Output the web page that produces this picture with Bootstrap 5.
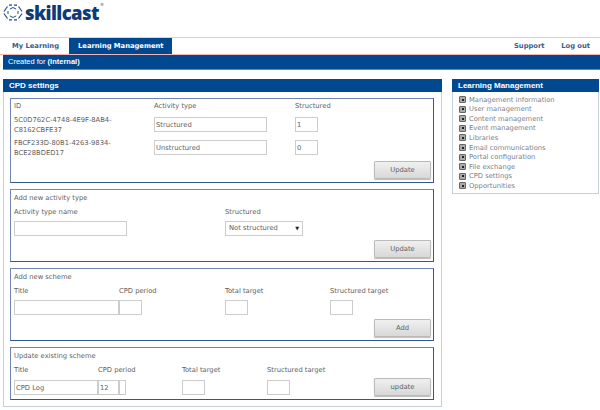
<!DOCTYPE html>
<html lang="en">
<head>
    <meta charset="UTF-8" />
    <title>CPD settings</title>
    <link href="https://cdn.jsdelivr.net/npm/bootstrap@5.3.2/dist/css/bootstrap.min.css" rel="stylesheet" />
    <style>
        html, body { height: 410px; overflow: hidden; }
        body { font-family: "DejaVu Sans", sans-serif; font-size: 6.75px; line-height: 10px; color: #606060; background: #fff; }
        .logo { height: 37px; padding-left: 3px; }
        .logo-icon { margin-top: 4px; }
        .logo-text { font-family: "Open Sans", sans-serif; font-weight: 800; font-size: 18.5px; line-height: 25px; color: #0f3a78; letter-spacing: -.6px; margin-left: 2px; }
        .logo-reg { font-size: 4px; line-height: 4px; color: #0f3a78; margin: 3px 0 0 1px; }
        .topnav { height: 18px; border-top: 1px solid #f5c6c6; border-bottom: 1px solid #f5b5b5; }
        .topnav a { font-weight: 700; line-height: 16px; color: #3c5a8c; text-decoration: none; }
        .topnav .tab { padding: 0 10px 0 12px; }
        .topnav .tab.active { background: #004990; color: #fff; padding: 0 8px 0 9px; }
        .topnav .right { width: 76px; margin-right: 10px; }
        .created { height: 15px; margin-left: 3px; background: #004990; color: #fff; font-family: "Liberation Sans", sans-serif; font-size: 7.5px; line-height: 14px; padding-left: 5px; border-bottom: 1px solid #6d83ad; }
        .content { padding: 9px 1px 0 3px; }
        .main-panel { width: 439px; height: 328px; border: 1px solid #c5cfe2; border-top: 0; }
        .side-panel { width: 147px; height: 115px; border: 1px solid #c5cfe2; border-top: 0; }
        .panel-head { height: 13px; margin: 0 -1px; background: #004990; color: #fff; font-family: "Liberation Sans", sans-serif; font-weight: 700; font-size: 8px; line-height: 13px; padding-left: 6px; }
        .side-list { padding: 3px 0 0 6px; }
        .side-list a { display: flex; align-items: center; height: 9.55px; color: #7b7f88; text-decoration: none; }
        .bullet { width: 7px; height: 7px; margin-right: 3px; background: #aaa; border: 1px solid #666; border-radius: 1px; display: flex; align-items: center; justify-content: center; }
        .bullet::after { content: ""; width: 2px; height: 2px; background: #222; }
        .sets { padding: 6px 7px 0 6px; }
        .set { border: 1px solid #34558f; border-left-color: #6f86b4; border-top-color: #6f86b4; padding: 3px 3px 0 3px; margin-bottom: 6px; position: relative; }
        .set1 { height: 85px; padding-top: 2px; } .set2, .set3 { height: 73px; } .set4 { height: 53px; }
        .lbl { height: 10px; line-height: 10px; }
        .fld { height: 15px; border: 1px solid #ccc; background: #fff; padding: 0 1px; color: #606060; font: inherit; line-height: 13px; display: block; border-radius: 0; outline: 0; }
        .btn-upd { width: 57px; height: 18px; padding: 0; font-size: 6.75px; line-height: 16px; color: #5a6068; background: linear-gradient(#f0f0f0, #d8d8d8); border: 1px solid #bbb; border-radius: 1px; box-shadow: 0 1px 1px #bbb; }
        .btn-slot { position: absolute; right: 2px; bottom: 3px; }
        .c-id { width: 140px; } .c-type { width: 141px; } .c-str { width: 60px; }
        .id-cell { margin-top: -2px; }
        .gap-head { margin-bottom: 6px; }
        .gap-row { margin-bottom: 8px; }
        .gap-lbl { margin-bottom: 4px; }
        .gap-lbl-wide { margin-bottom: 5px; }
        .w-113 { width: 113px; } .w-23 { width: 23px; }
        .c-211 { width: 211px; }
        .sel { width: 78px; display: flex; justify-content: space-between; align-items: center; padding: 0 3px; }
        .caret-d { font-size: 5px; color: #222; }
        .c-105 { width: 105px; } .c-106 { width: 106px; }
        .c-84 { width: 84px; } .c-85 { width: 85px; }
        .w-105 { width: 105px; } .w-84 { width: 84px; } .w-21 { width: 21px; } .w-7 { width: 7px; }
    </style>
</head>
<body>
    <div class="logo d-flex align-items-start">
        <svg class="logo-icon" width="20" height="17" viewBox="0 0 20 17" fill="none" stroke="#1f4b8e" stroke-width="1.2">
            <path d="M6 1.2h3M11 1.2h3M15.5 2.5l3.6 5M19.1 9.5l-3.6 5M14 15.8h-3M9 15.8H6M4.5 14.5L.9 9.5M.9 7.5l3.6-5" />
            <path d="M10 3.5l3.2 1.6M15 7v3M13.2 11.9L10 13.5l-3.2-1.6M5 10V7M6.8 5.1L10 3.5" stroke-width="1" />
        </svg>
        <span class="logo-text">skillcast</span>
        <span class="logo-reg">®</span>
    </div>

    <nav class="topnav d-flex justify-content-between">
        <div class="d-flex">
            <a class="tab" href="#">My Learning</a>
            <a class="tab active" href="#">Learning Management</a>
        </div>
        <div class="right d-flex justify-content-between">
            <a href="#">Support</a>
            <a href="#">Log out</a>
        </div>
    </nav>
    <div class="created">Created for <b>(Internal)</b></div>

    <div class="content d-flex justify-content-between">
        <div class="main-panel">
            <div class="panel-head">CPD settings</div>
            <div class="sets">
                <div class="set set1">
                    <div class="d-flex gap-head">
                        <div class="c-id lbl">ID</div>
                        <div class="c-type lbl">Activity type</div>
                        <div class="c-str lbl">Structured</div>
                    </div>
                    <div class="d-flex gap-row">
                        <div class="c-id lbl id-cell">5C0D762C-4748-4E9F-8AB4-<br>C8162CBFE37</div>
                        <div class="c-type"><input class="fld w-113" value="Structured"></div>
                        <div class="c-str"><input class="fld w-23" value="1"></div>
                    </div>
                    <div class="d-flex">
                        <div class="c-id lbl id-cell">FBCF233D-80B1-4263-9834-<br>BCE28BDED17</div>
                        <div class="c-type"><input class="fld w-113" value="Unstructured"></div>
                        <div class="c-str"><input class="fld w-23" value="0"></div>
                    </div>
                    <div class="btn-slot"><button class="btn btn-upd" type="button">Update</button></div>
                </div>

                <div class="set set2">
                    <div class="mb-1 lbl">Add new activity type</div>
                    <div class="d-flex gap-lbl">
                        <div class="c-211 lbl">Activity type name</div>
                        <div class="lbl">Structured</div>
                    </div>
                    <div class="d-flex">
                        <div class="c-211"><input class="fld w-113" value=""></div>
                        <div class="fld sel"><span>Not structured</span><span class="caret-d">▼</span></div>
                    </div>
                    <div class="btn-slot"><button class="btn btn-upd" type="button">Update</button></div>
                </div>

                <div class="set set3">
                    <div class="mb-1 lbl">Add new scheme</div>
                    <div class="d-flex gap-lbl">
                        <div class="c-105 lbl">Title</div>
                        <div class="c-106 lbl">CPD period</div>
                        <div class="c-105 lbl">Total target</div>
                        <div class="lbl">Structured target</div>
                    </div>
                    <div class="d-flex">
                        <div class="c-105"><input class="fld w-105" value=""></div>
                        <div class="c-106"><input class="fld w-23" value=""></div>
                        <div class="c-105"><input class="fld w-23" value=""></div>
                        <div><input class="fld w-23" value=""></div>
                    </div>
                    <div class="btn-slot"><button class="btn btn-upd" type="button">Add</button></div>
                </div>

                <div class="set set4">
                    <div class="mb-1 lbl">Update existing scheme</div>
                    <div class="d-flex gap-lbl-wide">
                        <div class="c-84 lbl">Title</div>
                        <div class="c-84 lbl">CPD period</div>
                        <div class="c-85 lbl">Total target</div>
                        <div class="lbl">Structured target</div>
                    </div>
                    <div class="d-flex">
                        <div class="c-84"><input class="fld w-84" value="CPD Log"></div>
                        <div class="c-84 d-flex"><input class="fld w-21" value="12"><input class="fld w-7" value=""></div>
                        <div class="c-85"><input class="fld w-23" value=""></div>
                        <div><input class="fld w-23" value=""></div>
                    </div>
                    <div class="btn-slot"><button class="btn btn-upd" type="button">update</button></div>
                </div>
            </div>
        </div>

        <aside class="side-panel">
            <div class="panel-head">Learning Management</div>
            <div class="side-list">
                <a href="#"><span class="bullet"></span>Management information</a>
                <a href="#"><span class="bullet"></span>User management</a>
                <a href="#"><span class="bullet"></span>Content management</a>
                <a href="#"><span class="bullet"></span>Event management</a>
                <a href="#"><span class="bullet"></span>Libraries</a>
                <a href="#"><span class="bullet"></span>Email communications</a>
                <a href="#"><span class="bullet"></span>Portal configuration</a>
                <a href="#"><span class="bullet"></span>File exchange</a>
                <a href="#"><span class="bullet"></span>CPD settings</a>
                <a href="#"><span class="bullet"></span>Opportunities</a>
            </div>
        </aside>
    </div>
    <script src="https://cdn.jsdelivr.net/npm/bootstrap@5.3.2/dist/js/bootstrap.bundle.min.js"></script>
</body>
</html>
